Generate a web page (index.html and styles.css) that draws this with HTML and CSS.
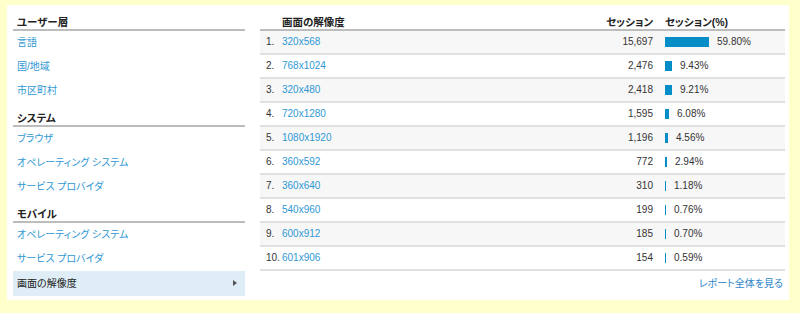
FILE: index.html
```html
<!DOCTYPE html>
<html lang="ja">
<head>
<meta charset="utf-8">
<title>画面の解像度</title>
<link rel="stylesheet" href="styles.css">
</head>
<body>
<div class="panel">
  <nav class="side">
    <div class="sec-title">ユーザー層</div>
    <a class="item" href="#">言語</a>
    <a class="item" href="#">国/地域</a>
    <a class="item" href="#">市区町村</a>
    <div class="sec-title">システム</div>
    <a class="item" href="#">ブラウザ</a>
    <a class="item" href="#">オペレーティング システム</a>
    <a class="item" href="#">サービス プロバイダ</a>
    <div class="sec-title">モバイル</div>
    <a class="item" href="#">オペレーティング システム</a>
    <a class="item" href="#">サービス プロバイダ</a>
    <div class="item selected">画面の解像度<span class="arrow"></span></div>
  </nav>
  <div class="main">
    <div class="thead">
      <span></span>
      <span class="h-dim">画面の解像度</span>
      <span class="h-sess">セッション</span>
      <span class="h-pct">セッション(%)</span>
    </div>
    <div class="row"><span class="num">1.</span><a class="dim" href="#">320x568</a><span class="sess">15,697</span><span class="pct"><i class="bar" style="width:44px"></i>59.80%</span></div>
    <div class="row"><span class="num">2.</span><a class="dim" href="#">768x1024</a><span class="sess">2,476</span><span class="pct"><i class="bar" style="width:7px"></i>9.43%</span></div>
    <div class="row"><span class="num">3.</span><a class="dim" href="#">320x480</a><span class="sess">2,418</span><span class="pct"><i class="bar" style="width:7px"></i>9.21%</span></div>
    <div class="row"><span class="num">4.</span><a class="dim" href="#">720x1280</a><span class="sess">1,595</span><span class="pct"><i class="bar" style="width:4px"></i>6.08%</span></div>
    <div class="row"><span class="num">5.</span><a class="dim" href="#">1080x1920</a><span class="sess">1,196</span><span class="pct"><i class="bar" style="width:3px"></i>4.56%</span></div>
    <div class="row"><span class="num">6.</span><a class="dim" href="#">360x592</a><span class="sess">772</span><span class="pct"><i class="bar" style="width:2px"></i>2.94%</span></div>
    <div class="row"><span class="num">7.</span><a class="dim" href="#">360x640</a><span class="sess">310</span><span class="pct"><i class="bar" style="width:1px"></i>1.18%</span></div>
    <div class="row"><span class="num">8.</span><a class="dim" href="#">540x960</a><span class="sess">199</span><span class="pct"><i class="bar" style="width:1px"></i>0.76%</span></div>
    <div class="row"><span class="num">9.</span><a class="dim" href="#">600x912</a><span class="sess">185</span><span class="pct"><i class="bar" style="width:1px"></i>0.70%</span></div>
    <div class="row"><span class="num">10.</span><a class="dim" href="#">601x906</a><span class="sess">154</span><span class="pct"><i class="bar" style="width:1px"></i>0.59%</span></div>
    <div class="foot"><a href="#">レポート全体を見る</a></div>
  </div>
</div>
</body>
</html>
```
FILE: styles.css
```css
html, body {
  margin: 0;
  padding: 0;
}
body {
  background: #ffffcc;
  font-family: "Liberation Sans", Arial, "Noto Sans CJK JP", sans-serif;
  font-size: 10px;
  color: #333;
  font-feature-settings: "palt";
}
a {
  text-decoration: none;
}
.panel {
  margin: 5px 11px 0 7px;
  height: 295px;
  box-sizing: border-box;
  background: #fff;
  display: flex;
  gap: 15px;
  padding: 2px 4px 0 6px;
}
.side {
  width: 232px;
  flex: none;
  display: flex;
  flex-direction: column;
}
.sec-title {
  height: 22px;
  line-height: 14px;
  display: flex;
  align-items: flex-end;
  padding-left: 4px;
  border-bottom: 2px solid #bdbdbd;
  font-weight: bold;
  font-size: 10.5px;
  color: #222;
}
.item {
  height: 24px;
  line-height: 24px;
  padding-left: 4px;
  color: #2f98d3;
  position: relative;
}
.item.selected {
  background: #deedf6;
  color: #222;
  height: 25px;
  line-height: 25px;
}
.arrow {
  position: absolute;
  right: 8px;
  top: 9px;
  width: 0;
  height: 0;
  border-left: 4px solid #555;
  border-top: 3px solid transparent;
  border-bottom: 3px solid transparent;
}
.main {
  flex: 1;
  display: flex;
  flex-direction: column;
}
.thead, .row {
  display: grid;
  grid-template-columns: 16px 1fr 93px 120px;
  padding-left: 6px;
}
.thead {
  height: 22px;
  line-height: 14px;
  align-items: end;
  border-bottom: 2px solid #bdbdbd;
  font-weight: bold;
  font-size: 10.5px;
  color: #222;
}
.h-sess {
  text-align: right;
  padding-right: 12px;
}
.row {
  height: 22px;
  line-height: 22px;
  align-items: center;
  border-bottom: 2px solid #e0e0e0;
}
.row:nth-of-type(even) {
  background: #f7f7f7;
}
.num {
  color: #333;
}
.dim {
  color: #2f98d3;
}
.sess {
  text-align: right;
  padding-right: 12px;
}
.pct {
  display: flex;
  align-items: center;
}
.bar {
  display: block;
  height: 10px;
  background: #058dc7;
  margin-right: 8px;
  flex: none;
}
.foot {
  text-align: right;
  padding-right: 2px;
  margin-top: 6px;
  line-height: 14px;
}
.foot a {
  color: #2e86c8;
}
```
